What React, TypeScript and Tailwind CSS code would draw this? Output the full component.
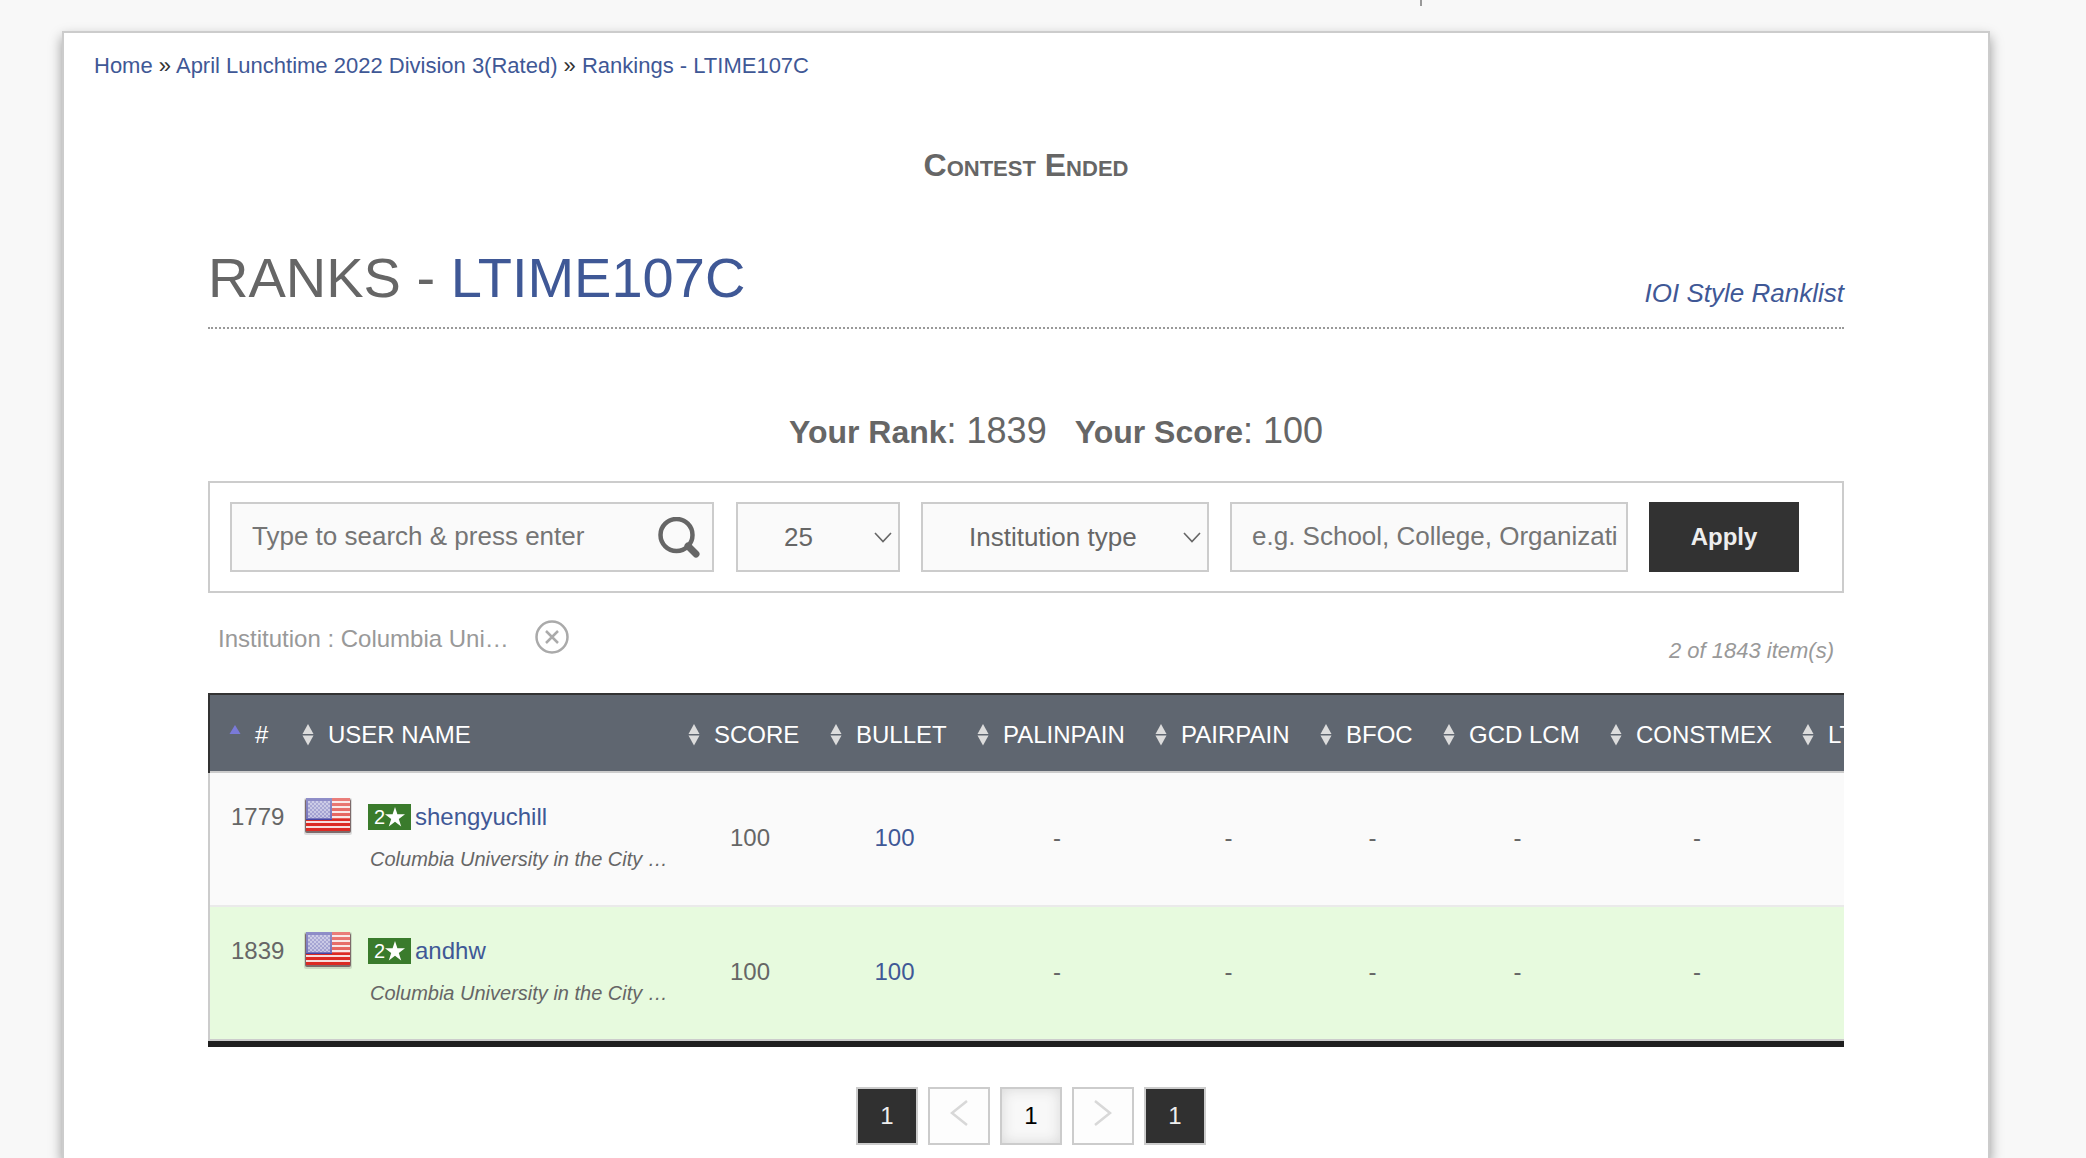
import type { ReactNode } from 'react';

function SearchIcon() {
  return (
    <svg width="42" height="42" viewBox="0 0 42 42" fill="none" stroke="#666" aria-hidden="true">
      <circle cx="18.500" cy="18" r="16" strokeWidth="4.5" />
      <path d="M30 29l8 8" strokeWidth="7" strokeLinecap="round" />
    </svg>
  );
}

function Chevron() {
  return (
    <svg width="18" height="12" viewBox="0 0 18 12" fill="none" stroke="#666" strokeWidth="1.6" aria-hidden="true">
      <path d="M1 1l8 8.500 8-8.500" />
    </svg>
  );
}

function SortIcon({ active = false }: { active?: boolean }) {
  return (
    <svg width="12" height="22" viewBox="0 0 12 22" className="mr-3.5 shrink-0" aria-hidden="true">
      {active ? (
        <path d="M6 1l5.500 9h-11z" fill="#7a7ad8" />
      ) : (
        <>
          <path d="M6 0l5.500 10h-11z" fill="#dcdcdc" />
          <path d="M6 21.500l5.500-10h-11z" fill="#dcdcdc" />
        </>
      )}
    </svg>
  );
}

function Flag() {
  return (
    <svg width="48" height="38" viewBox="0 0 48 38" role="img" aria-label="United States">
      <defs>
        <linearGradient id="gloss" x1="0" y1="0" x2="0" y2="1">
          <stop offset="0" stopColor="#fff" stopOpacity="0.4" />
          <stop offset="0.64" stopColor="#fff" stopOpacity="0.25" />
          <stop offset="0.65" stopColor="#fff" stopOpacity="0" />
        </linearGradient>
        <pattern id="stars" width="4" height="4" patternUnits="userSpaceOnUse">
          <rect width="2" height="2" fill="#fff" opacity="0.4" />
          <rect x="2" y="2" width="2" height="2" fill="#fff" opacity="0.4" />
        </pattern>
      </defs>
      <rect x="0" y="1" width="48" height="37" rx="2" fill="#000" opacity="0.12" />
      <rect x="1" y="2" width="46" height="34" rx="2" fill="#7d6a6a" />
      <rect x="2" y="1" width="44" height="33" rx="1" fill="#f6dede" />
      <path d="M2 2.500h44M2 7.500h44M2 12.500h44M2 17.500h44M2 22.500h44M2 27.500h44M2 32.500h44" stroke="#dc2a24" strokeWidth="3" />
      <rect x="2" y="1" width="26" height="22" fill="#4644a4" />
      <rect x="4" y="4" width="22" height="17" fill="#fff" opacity="0.3" />
      <rect x="4" y="4" width="22" height="17" fill="url(#stars)" />
      <rect x="2" y="1" width="44" height="33" fill="url(#gloss)" />
    </svg>
  );
}

function SelectBox({ label, value, className }: { label: string; value: string; className: string }) {
  return (
    <div className={`relative h-[70px] ${className}`}>
      <select
        aria-label={label}
        defaultValue={value}
        className="h-full w-full appearance-none border-2 border-[#ccc] bg-[#fafafa] pl-[46px] text-[26px] text-[#666]"
      >
        <option>{value}</option>
      </select>
      <span className="pointer-events-none absolute top-[30px] right-2">
        <Chevron />
      </span>
    </div>
  );
}

const columns = [
  { name: 'SCORE', width: 'w-[142px]' },
  { name: 'BULLET', width: 'w-[147px]' },
  { name: 'PALINPAIN', width: 'w-[178px]' },
  { name: 'PAIRPAIN', width: 'w-[165px]' },
  { name: 'BFOC', width: 'w-[123px]' },
  { name: 'GCD LCM', width: 'w-[167px]' },
  { name: 'CONSTMEX', width: 'w-[192px]' },
  { name: 'LT', width: 'w-[140px]' },
];

const rows = [
  { rank: 1779, user: 'shengyuchill', mine: false },
  { rank: 1839, user: 'andhw', mine: true },
];

function HeadCell({ children, width, active }: { children: ReactNode; width: string; active?: boolean }) {
  return (
    <th scope="col" className={`h-[78px] p-0 pt-1 pl-[9px] text-left font-normal ${width}`}>
      <button type="button" className={`flex items-center ${active ? 'ml-2.5' : ''}`}>
        <SortIcon active={active} />
        {children}
      </button>
    </th>
  );
}

function RankTable() {
  return (
    <div className="overflow-hidden border-b-[6px] border-[#1f1f1f]">
      <table className="w-[1724px] table-fixed border-collapse text-[24px] text-[#666]">
        <thead>
          <tr className="border-t-2 border-l-2 border-[#333] bg-[#5f6670] text-white">
            <HeadCell width="w-[84px]" active>#</HeadCell>
            <HeadCell width="w-[386px]">USER NAME</HeadCell>
            {columns.map((c) => (
              <HeadCell key={c.name} width={c.width}>{c.name}</HeadCell>
            ))}
          </tr>
        </thead>
        <tbody>
          {rows.map((r) => (
            <tr
              key={r.rank}
              className={`h-[134px] border-l-2 border-l-[#ccc] ${
                r.mine ? 'border-y-2 border-t-[#eaeaea] border-b-[#ccc] bg-[#e7fade]' : 'border-t-2 border-t-[#ccc] bg-[#fafafa]'
              }`}
            >
              <td className="p-0 pt-[26px] pl-[21px] align-top">{r.rank}</td>
              <td className="p-0 pt-6 pl-[11px] align-top">
                <div className="flex">
                  <Flag />
                  <div className="ml-4">
                    <div className="flex items-center gap-1 pt-[5px]">
                      <span className="flex h-[26px] w-[43px] items-center justify-center bg-[#3a7b2c] text-[20px] text-white">
                        2
                        <svg width="20" height="20" viewBox="0 0 20 20" fill="#fff" aria-label="star">
                          <path d="M10 0l2.400 7.300h7.600l-6.200 4.600 2.400 7.500-6.200-4.600-6.200 4.600 2.400-7.500L0 7.300h7.600z" />
                        </svg>
                      </span>
                      <a href="#user" className="leading-[30px] text-[#3f5896]">{r.user}</a>
                    </div>
                    <p className="mt-[15px] ml-0.5 text-[20px] leading-6 italic">Columbia University in the City …</p>
                  </div>
                </div>
              </td>
              <td className="p-0 pb-[3px] text-center">100</td>
              <td className="p-0 pb-[3px] text-center">
                <a href="#solution" className="text-[#3f5896]">100</a>
              </td>
              <td className="p-0 pb-[3px] text-center">-</td>
              <td className="p-0 pb-[3px] text-center">-</td>
              <td className="p-0 pb-[3px] text-center">-</td>
              <td className="p-0 pb-[3px] text-center">-</td>
              <td className="p-0 pb-[3px] text-center">-</td>
              <td className="p-0" />
            </tr>
          ))}
        </tbody>
      </table>
    </div>
  );
}

function Arrow({ next = false }: { next?: boolean }) {
  return (
    <svg width="18" height="26" viewBox="0 0 18 26" fill="none" stroke="#d8d8d8" strokeWidth="2.5" aria-hidden="true">
      <path d={next ? 'M1 1l15 12L1 25' : 'M17 1L2 13l15 12'} />
    </svg>
  );
}

function Pager() {
  const base = 'flex h-[58px] w-[62px] items-center justify-center border-2 border-[#ccc] text-[24px]';
  return (
    <nav aria-label="Pages" className="mt-10 flex justify-center gap-2.5 pl-2.5">
      <button type="button" className={`${base} bg-[#303030] text-[#eee]`}>1</button>
      <button type="button" aria-label="Previous" className={`${base} bg-[#fdfdfd] pb-1.5`}><Arrow /></button>
      <button type="button" className={`${base} bg-[#f8f8f8] text-black shadow-[inset_0_0_14px_#d8d8d8]`}>1</button>
      <button type="button" aria-label="Next" className={`${base} bg-[#fdfdfd] pb-1.5`}><Arrow next /></button>
      <button type="button" className={`${base} bg-[#303030] text-[#eee]`}>1</button>
    </nav>
  );
}

export default function App() {
  return (
    <div className="flex min-h-screen flex-col bg-[#f8f8f8] font-['Liberation_Sans',Arial,sans-serif] text-[#666]">
      <div className="h-[31px] shrink-0">
        <div className="ml-[1420px] h-1.5 w-0.5 bg-[#999]" />
      </div>
      <main className="mr-24 ml-[62px] flex-1 border-2 border-b-0 border-[#ccc] bg-white pb-[13px] shadow-[0_6px_12px_rgba(0,0,0,0.4)]">
        <nav aria-label="Breadcrumb" className="pt-[19px] pl-[30px] text-[22px] leading-7 text-[#333]">
          <a href="#home" className="text-[#3f5896]">Home</a> »{' '}
          <a href="#contest" className="text-[#3f5896]">April Lunchtime 2022 Division 3(Rated)</a> »{' '}
          <a href="#rankings" className="text-[#3f5896]">Rankings - LTIME107C</a>
        </nav>
        <div className="mx-36">
          <h2 className="mt-[65px] text-center text-[32px] leading-10 font-bold [font-variant:small-caps]">Contest Ended</h2>
          <div className="mt-[60px] flex items-end justify-between border-b-2 border-dotted border-[#999] pb-4">
            <h1 className="text-[56px] leading-[66px]">
              RANKS - <a href="#contest" className="text-[#3f5896]">LTIME107C</a>
            </h1>
            <a href="#ioi" className="pb-0.5 text-[26px] leading-8 text-[#3f5896] italic">IOI Style Ranklist</a>
          </div>
          <p className="mt-20 pl-[60px] text-center text-[36px] leading-[44px] whitespace-pre">
            <b className="text-[32px]">Your Rank</b>: 1839{'  '}
            <b className="ml-2 text-[32px]">Your Score</b>: 100
          </p>
          <form className="mt-[27px] flex h-28 items-center border-2 border-[#ccc] pl-5" onSubmit={(e) => e.preventDefault()}>
            <div className="relative mr-[22px] h-[70px] w-[484px]">
              <input
                type="text"
                aria-label="Search"
                placeholder="Type to search & press enter"
                className="h-full w-full border-2 border-[#ccc] bg-[#fafafa] pr-16 pb-0.5 pl-5 text-[26px] placeholder:text-[#757575]"
              />
              <button type="submit" aria-label="Search" className="absolute top-[15px] right-3.5">
                <SearchIcon />
              </button>
            </div>
            <SelectBox label="Items per page" value="25" className="mr-[21px] w-[164px]" />
            <SelectBox label="Institution type" value="Institution type" className="mr-[21px] w-[288px]" />
            <input
              type="text"
              aria-label="Institution"
              placeholder="e.g. School, College, Organization"
              className="mr-[21px] h-[70px] w-[398px] border-2 border-[#ccc] bg-[#fafafa] pr-2 pb-0.5 pl-5 text-[26px] placeholder:text-[#757575]"
            />
            <button type="submit" className="h-[70px] w-[150px] bg-[#323232] text-[24px] font-bold text-[#eee]">Apply</button>
          </form>
          <div className="flex h-[100px] items-start justify-between px-2.5 text-[#999]">
            <div className="flex items-start text-[24px] leading-9">
              <span className="pt-7">Institution : Columbia Uni…</span>
              <button type="button" aria-label="Remove filter" className="ml-[26px] pt-[27px]">
                <svg width="34" height="34" viewBox="0 0 34 34" fill="none" stroke="#aaa" strokeWidth="2.5">
                  <circle cx="17" cy="17" r="15.500" />
                  <path d="M11 11l12 12M23 11L11 23" />
                </svg>
              </button>
            </div>
            <span className="pt-[44px] text-[22px] leading-7 italic">2 of 1843 item(s)</span>
          </div>
          <RankTable />
          <Pager />
        </div>
      </main>
    </div>
  );
}
